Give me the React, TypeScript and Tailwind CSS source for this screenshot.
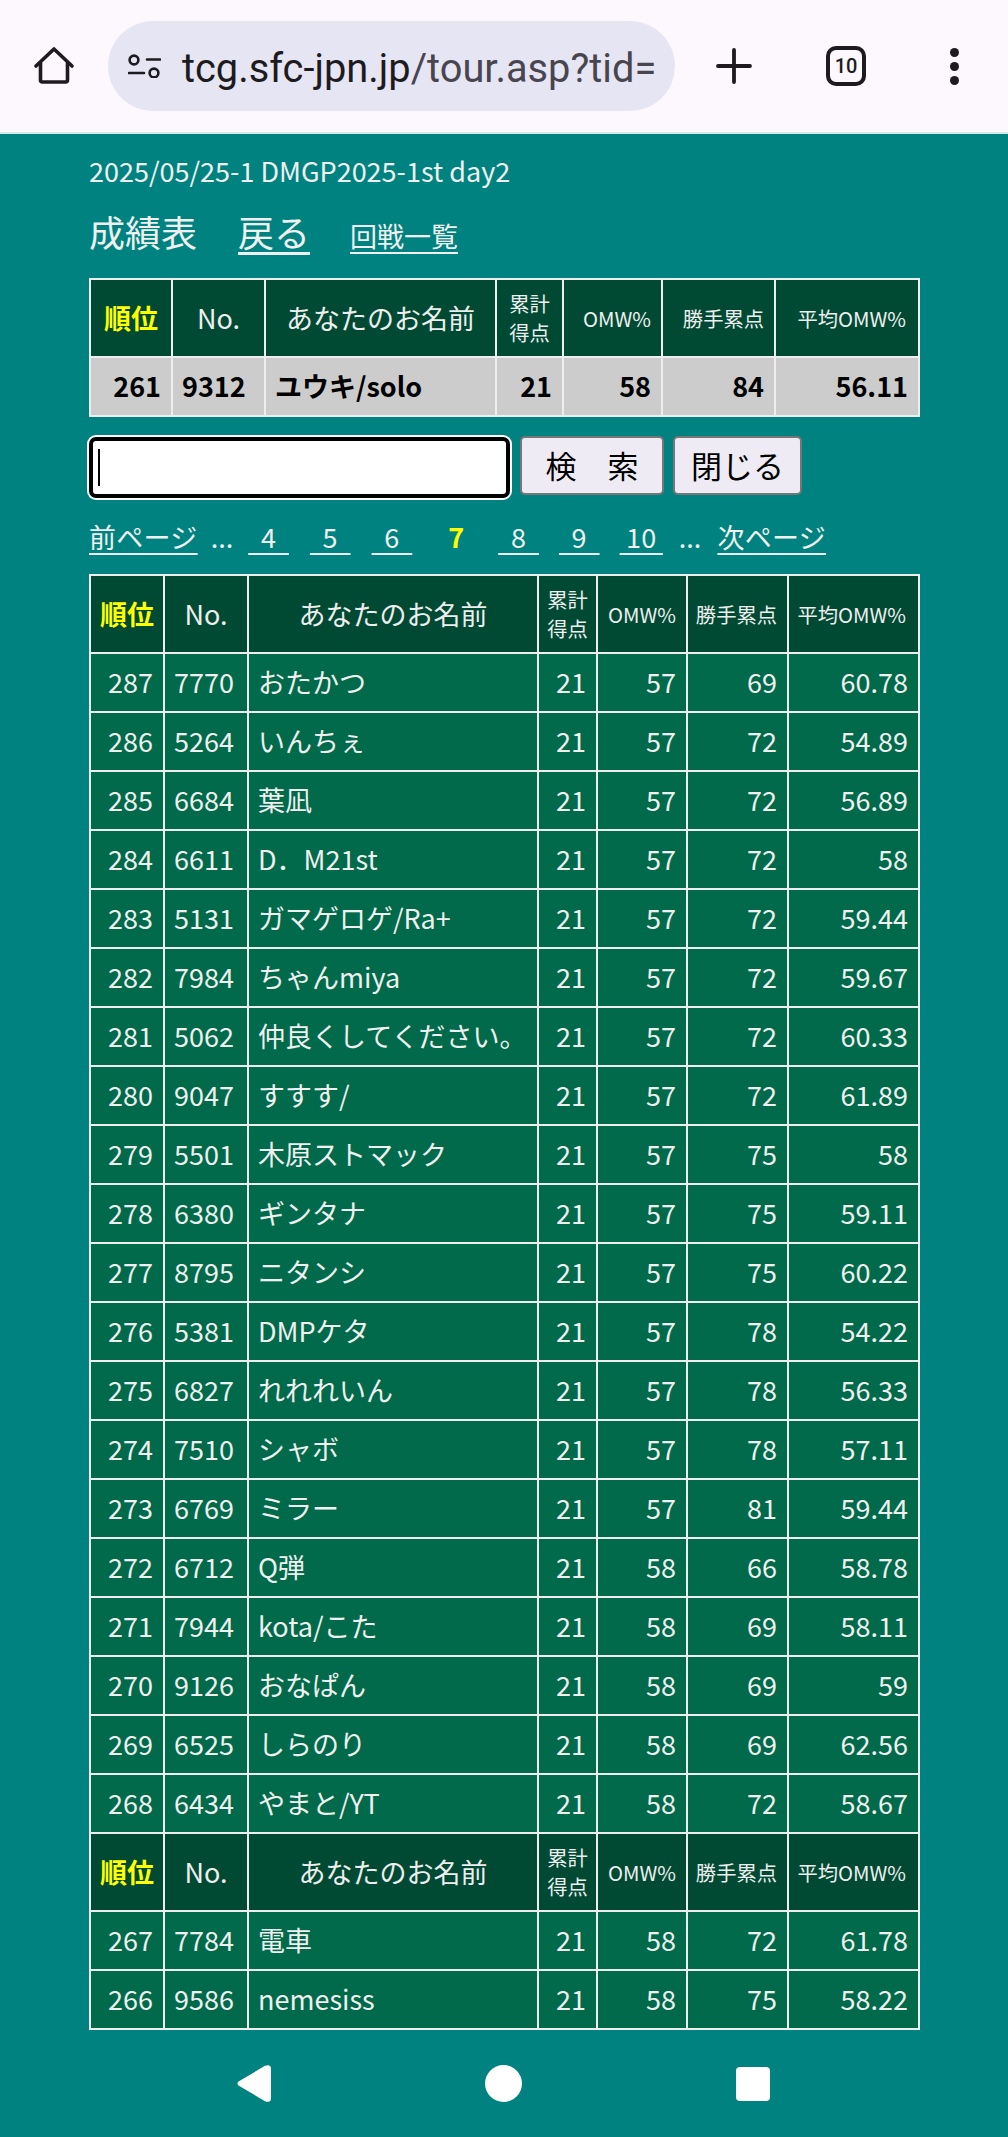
type Row = [number, number, string, number, number, number, string]

const ROWS_A: Row[] = [
  [287, 7770, "おたかつ", 21, 57, 69, "60.78"],
  [286, 5264, "いんちぇ", 21, 57, 72, "54.89"],
  [285, 6684, "葉凪", 21, 57, 72, "56.89"],
  [284, 6611, "D．M21st", 21, 57, 72, "58"],
  [283, 5131, "ガマゲロゲ/Ra+", 21, 57, 72, "59.44"],
  [282, 7984, "ちゃんmiya", 21, 57, 72, "59.67"],
  [281, 5062, "仲良くしてください。", 21, 57, 72, "60.33"],
  [280, 9047, "すすす/", 21, 57, 72, "61.89"],
  [279, 5501, "木原ストマック", 21, 57, 75, "58"],
  [278, 6380, "ギンタナ", 21, 57, 75, "59.11"],
  [277, 8795, "ニタンシ", 21, 57, 75, "60.22"],
  [276, 5381, "DMPケタ", 21, 57, 78, "54.22"],
  [275, 6827, "れれれいん", 21, 57, 78, "56.33"],
  [274, 7510, "シャボ", 21, 57, 78, "57.11"],
  [273, 6769, "ミラー", 21, 57, 81, "59.44"],
  [272, 6712, "Q弾", 21, 58, 66, "58.78"],
  [271, 7944, "kota/こた", 21, 58, 69, "58.11"],
  [270, 9126, "おなぱん", 21, 58, 69, "59"],
  [269, 6525, "しらのり", 21, 58, 69, "62.56"],
  [268, 6434, "やまと/YT", 21, 58, 72, "58.67"],
]

const ROWS_B: Row[] = [
  [267, 7784, "電車", 21, 58, 72, "61.78"],
  [266, 9586, "nemesiss", 21, 58, 75, "58.22"],
]

const TH = "border-2 border-[#eeeeee] bg-[#004a34] p-0"
const TH_BIG = `${TH} text-center text-[27px] font-normal text-[#eeeeee]`
const TH_SMALL = `${TH} text-right pr-[10px] text-[20.3px] font-normal text-[#eeeeee]`
const TD = "border-2 border-[#eeeeee] bg-[#006a4a] text-[#f0f0f0] align-middle whitespace-nowrap"
const TD_GRAY = "border-2 border-[#eeeeee] bg-[#cccccc] text-black align-middle whitespace-nowrap"
const NUM = "text-right pr-[10px]"
const TXT = "text-left pl-[9px]"

function HeadRow() {
  return (
    <tr className="h-[78px]">
      <th className={`${TH} text-center text-[27px] font-bold text-[#ffff00]`}>順位</th>
      <th className={TH_BIG}>No.</th>
      <th className={TH_BIG}>あなたのお名前</th>
      <th className={`${TH} text-center text-[20.3px] font-normal leading-[29px] text-[#eeeeee]`}>累計<br />得点</th>
      <th className={TH_SMALL}>OMW%</th>
      <th className={TH_SMALL}>勝手累点</th>
      <th className={`${TH} text-right pr-[12px] text-[20.3px] font-normal text-[#eeeeee]`}>平均OMW%</th>
    </tr>
  )
}

function DataRow({ row }: { row: Row }) {
  return (
    <tr className="h-[59px] text-[27px]">
      <td className={`${TD} ${NUM}`}>{row[0]}</td>
      <td className={`${TD} ${TXT}`}>{row[1]}</td>
      <td className={`${TD} ${TXT}`}>{row[2]}</td>
      <td className={`${TD} ${NUM}`}>{row[3]}</td>
      <td className={`${TD} ${NUM}`}>{row[4]}</td>
      <td className={`${TD} ${NUM}`}>{row[5]}</td>
      <td className={`${TD} ${NUM}`}>{row[6]}</td>
    </tr>
  )
}

function PageLink({ label }: { label: string }) {
  return <a className="underline underline-offset-[5px] whitespace-pre tracking-[0.3px]">{label}</a>
}

export default function App() {
  return (
    <div className="h-[2137px] w-[1008px] overflow-hidden bg-[#008380] font-['Noto_Sans_CJK_JP','Liberation_Sans',sans-serif] text-[#f0f0f0]">
      {/* browser bar */}
      <div className="flex h-[134px] items-center border-b-2 border-[#d8e8e8] bg-[#fdf8fd] text-[#1d1b20]">
        <div className="flex w-[108px] justify-center">
          <svg viewBox="0 0 40 40" className="h-[40px] w-[40px]" fill="none" stroke="#1d1b20" strokeWidth="3.6" strokeLinecap="round" strokeLinejoin="round">
            <path d="M2 20 20 3l18 17" />
            <path d="M6.5 17v17a2 2 0 0 0 2 2h23a2 2 0 0 0 2-2V17" />
          </svg>
        </div>
        <div className="flex h-[90px] w-[567px] items-center overflow-hidden rounded-full bg-[#e6e5f3] pl-[20px]">
          <svg viewBox="0 0 33 24" className="h-[24px] w-[33px] shrink-0" fill="none" stroke="#1d1b20" strokeWidth="2.6" strokeLinecap="round">
            <circle cx="6" cy="6" r="4.4" />
            <path d="M19 5.5h13M1 19h15" />
            <circle cx="26" cy="19" r="4.4" />
          </svg>
          <span className="ml-[21px] mt-[5px] whitespace-nowrap font-['Roboto',sans-serif] text-[39.8px]">
            tcg.sfc-jpn.jp<span className="text-[#49454f]">/tour.asp?tid=</span>
          </span>
        </div>
        <svg viewBox="0 0 36 36" className="ml-[41px] h-[36px] w-[36px]" fill="none" stroke="#1d1b20" strokeWidth="3.8" strokeLinecap="round">
          <path d="M18 2v32M2 18h32" />
        </svg>
        <div className="ml-[74px] flex h-[40px] w-[40px] items-center justify-center rounded-[10px] border-[4px] border-[#1d1b20] font-['Roboto',sans-serif] text-[20px] font-medium">
          10
        </div>
        <div className="ml-[84px] flex flex-col gap-[5px]">
          <div className="h-[9px] w-[9px] rounded-full bg-[#1d1b20]" />
          <div className="h-[9px] w-[9px] rounded-full bg-[#1d1b20]" />
          <div className="h-[9px] w-[9px] rounded-full bg-[#1d1b20]" />
        </div>
      </div>

      <div className="px-[89px]">
        <div className="mt-[18px] text-[27px] leading-[38px]">2025/05/25-1 DMGP2025-1st day2</div>
        <div className="mt-[15px] flex items-baseline text-[36px] leading-[52px]">
          <span>成績表</span>
          <a className="ml-[41px] underline underline-offset-[5px]">戻る</a>
          <a className="ml-[40px] text-[27px] underline underline-offset-[5px]">回戦一覧</a>
        </div>

        <table className="mt-[16px] w-[829px] table-fixed border-collapse">
          <colgroup>
            <col className="w-[82px]" />
            <col className="w-[93px]" />
            <col className="w-[231px]" />
            <col className="w-[67px]" />
            <col className="w-[99px]" />
            <col className="w-[113px]" />
            <col className="w-[144px]" />
          </colgroup>
          <tbody>
            <HeadRow />
            <tr className="h-[59px] text-[27px] font-bold">
              <td className={`${TD_GRAY} ${NUM}`}>261</td>
              <td className={`${TD_GRAY} ${TXT}`}>9312</td>
              <td className={`${TD_GRAY} ${TXT}`}>ユウキ/solo</td>
              <td className={`${TD_GRAY} ${NUM}`}>21</td>
              <td className={`${TD_GRAY} ${NUM}`}>58</td>
              <td className={`${TD_GRAY} ${NUM}`}>84</td>
              <td className={`${TD_GRAY} ${NUM}`}>56.11</td>
            </tr>
          </tbody>
        </table>

        <div className="mt-[20px] flex items-start">
          <div className="flex h-[61px] w-[421px] items-center rounded-[7px] border-[4px] border-black bg-white pl-[5px] shadow-[0_0_0_2px_#ffffff]">
            <div className="h-[37px] w-[2px] bg-black" />
          </div>
          <button className="ml-[10px] -mt-px h-[59px] w-[144px] rounded-[5px] border-2 border-[#767676] bg-[#efebf4] text-[31px] text-black whitespace-pre">検　索</button>
          <button className="ml-[9px] -mt-px h-[59px] w-[129px] rounded-[5px] border-2 border-[#767676] bg-[#efebf4] text-[31px] text-black">閉じる</button>
        </div>

        <div className="mt-[20px] flex items-baseline text-[27px] leading-[38px]">
          <PageLink label="前ページ" />
          <span className="ml-[13px]">...</span>
          <span className="ml-[15px]"><PageLink label={"\u00a0\u00a04\u00a0\u00a0"} /></span>
          <span className="ml-[21px]"><PageLink label={"\u00a0\u00a05\u00a0\u00a0"} /></span>
          <span className="ml-[21px]"><PageLink label={"\u00a0\u00a06\u00a0\u00a0"} /></span>
          <span className="ml-[36px] font-bold text-[#ffff00]">7</span>
          <span className="ml-[34px]"><PageLink label={"\u00a0\u00a08\u00a0\u00a0"} /></span>
          <span className="ml-[20px]"><PageLink label={"\u00a0\u00a09\u00a0\u00a0"} /></span>
          <span className="ml-[20px]"><PageLink label={"\u00a010\u00a0"} /></span>
          <span className="ml-[16px]">...</span>
          <span className="ml-[16px]"><PageLink label="次ページ" /></span>
        </div>

        <table className="mt-[18px] w-[829px] table-fixed border-collapse">
          <colgroup>
            <col className="w-[74px]" />
            <col className="w-[84px]" />
            <col className="w-[290px]" />
            <col className="w-[59px]" />
            <col className="w-[90px]" />
            <col className="w-[101px]" />
            <col className="w-[131px]" />
          </colgroup>
          <tbody>
            <HeadRow />
            {ROWS_A.map((row) => (
              <DataRow key={row[0]} row={row} />
            ))}
            <HeadRow />
            {ROWS_B.map((row) => (
              <DataRow key={row[0]} row={row} />
            ))}
          </tbody>
        </table>
      </div>

      {/* android nav */}
      <div className="mt-[35px] flex pl-[237px]">
        <svg viewBox="0 0 34 37" className="h-[37px] w-[34px]" fill="#ffffff">
          <path d="M28 .8 1.5 16.6q-2 1.9 0 3.8L28 36.2q6 2 6-3V3.8q0-5-6-3Z" />
        </svg>
        <div className="ml-[214px] h-[37px] w-[37px] rounded-full bg-white" />
        <div className="ml-[214px] mt-[2px] h-[34px] w-[34px] rounded-[4px] bg-white" />
      </div>
    </div>
  )
}
